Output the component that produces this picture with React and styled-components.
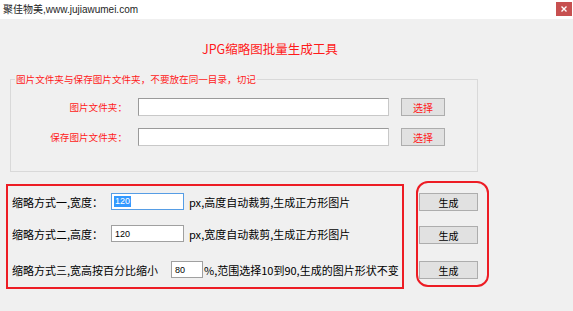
import React from 'react';
import styled, { createGlobalStyle } from 'styled-components';

const Global = createGlobalStyle`
  html, body { margin: 0; padding: 0; }
  body {
    width: 573px; height: 311px; overflow: hidden; background: #f0f0f0;
    font-family: "Noto Sans CJK SC", sans-serif;
  }
  * { box-sizing: border-box; }
`;

const Window = styled.div`
  width: 573px; height: 311px;
  display: flex; flex-direction: column;
  background: #f0f0f0;
`;

const TitleBar = styled.div`
  height: 19px; flex: none;
  background: #fff;
  display: flex; align-items: flex-start; justify-content: space-between;
  padding: 0 1px 0 3px;
`;

const Caption = styled.span`
  font-family: "Liberation Sans", "Noto Sans CJK SC", sans-serif;
  font-size: 10px; color: #1e1e1e; line-height: 19px;
`;

const CloseBtn = styled.div`
  width: 16px; height: 14px; margin-top: 2px;
  background: #c75050;
  display: flex; align-items: center; justify-content: center;
`;

const AppTitle = styled.div`
  margin-top: 20px; padding-left: 202px;
  height: 20px; line-height: 20px;
  font-size: 12.5px; color: #ff1a1a;
`;

const GroupBox = styled.fieldset`
  margin: 14px 0 0 10px; width: 468px;
  padding: 0 0 25px 0;
  border: 1px solid #d9d9d9;
  display: flex; flex-direction: column; gap: 12px;
`;

const Legend = styled.legend`
  margin-left: 4px; padding: 0 1px;
  font-size: 9.6px; line-height: 12px; color: #ff1a1a;
`;

const PathRow = styled.div`
  display: flex; align-items: center; height: 18px;
  &:first-of-type { margin-top: 13px; }
`;

const PathLabel = styled.div`
  width: 116px; line-height: 18px;
  text-align: right; font-size: 9.6px; color: #ff1a1a;
  margin-right: 11px;
`;

const PathInput = styled.div`
  width: 251px; height: 18px;
  background: #fff;
  border: 1px solid #9a9a9a;
  border-bottom-color: #c8c8c8; border-right-color: #c8c8c8;
`;

const Button = styled.div`
  width: ${p => p.$w}px; height: 18px;
  background: #e1e1e1; border: 1px solid #adadad;
  display: flex; align-items: center; justify-content: center;
  font-size: ${p => p.$fs || 10}px; color: ${p => p.$color || '#000'};
`;

const PickButton = styled(Button)`
  margin-left: 12px;
`;

const Bottom = styled.div`
  margin-top: 9px;
  display: flex; align-items: flex-start;
`;

const OptionsBox = styled.div`
  margin: 3px 0 0 6px;
  width: 398px; height: 105px;
  border: 2px solid #ed1c24;
  padding: 7px 0 0 4px;
  display: flex; flex-direction: column;
`;

const OptionRow = styled.div`
  display: flex; align-items: center;
  height: 17px;
  margin-top: ${p => p.$mt || 0}px;
  font-size: 11px; color: #000; white-space: nowrap;
`;

const OptLabel = styled.span`
  width: ${p => p.$w}px; flex: none;
`;

const NumBox = styled.div`
  width: ${p => p.$w}px; height: 17px; flex: none;
  background: #fff;
  border: 1px solid ${p => (p.$focus ? '#569de5' : '#a0a0a0')};
  padding-left: 2px;
  display: flex; align-items: center;
  font-size: 9px; font-family: "Liberation Sans", sans-serif; color: #000;
  margin-right: ${p => p.$gap || 0}px;
`;

const Selected = styled.span`
  background: #3399ff; color: #fff; padding: 0 1px; line-height: 11px;
`;

const Plain = styled.span`
  padding: 0 1px;
`;

const ActionBox = styled.div`
  margin-left: 12px;
  width: 73px; height: 106px;
  border: 2px solid #ed1c24; border-radius: 12px;
  padding: 10px 0 0 1px;
  display: flex; flex-direction: column;
`;

const GenButton = styled(Button)`
  margin-top: ${p => p.$mt || 0}px;
`;

export default function App() {
  return (
    <>
      <Global />
      <Window>
        <TitleBar>
          <Caption>聚佳物美,www.jujiawumei.com</Caption>
          <CloseBtn>
            <svg width="6" height="6" viewBox="0 0 6 6">
              <path d="M0.5 0.5 L5.5 5.5 M5.5 0.5 L0.5 5.5" stroke="#fff" strokeWidth="1.4" />
            </svg>
          </CloseBtn>
        </TitleBar>
        <AppTitle>JPG缩略图批量生成工具</AppTitle>
        <GroupBox>
          <Legend>图片文件夹与保存图片文件夹，不要放在同一目录，切记</Legend>
          <PathRow>
            <PathLabel>图片文件夹：</PathLabel>
            <PathInput />
            <PickButton $w={44} $color="#ff1a1a" $fs={10}>选择</PickButton>
          </PathRow>
          <PathRow>
            <PathLabel>保存图片文件夹：</PathLabel>
            <PathInput />
            <PickButton $w={44} $color="#ff1a1a" $fs={10}>选择</PickButton>
          </PathRow>
        </GroupBox>
        <Bottom>
          <OptionsBox>
            <OptionRow>
              <OptLabel $w={99}>缩略方式一,宽度：</OptLabel>
              <NumBox $w={73} $focus $gap={5}><Selected>120</Selected></NumBox>
              <span>px,高度自动裁剪,生成正方形图片</span>
            </OptionRow>
            <OptionRow $mt={15}>
              <OptLabel $w={99}>缩略方式二,高度：</OptLabel>
              <NumBox $w={73} $gap={5}><Plain>120</Plain></NumBox>
              <span>px,宽度自动裁剪,生成正方形图片</span>
            </OptionRow>
            <OptionRow $mt={19}>
              <OptLabel $w={159}>缩略方式三,宽高按百分比缩小</OptLabel>
              <NumBox $w={32} $gap={1}><Plain>80</Plain></NumBox>
              <span>%,范围选择10到90,生成的图片形状不变</span>
            </OptionRow>
          </OptionsBox>
          <ActionBox>
            <GenButton $w={59}>生成</GenButton>
            <GenButton $w={59} $mt={15}>生成</GenButton>
            <GenButton $w={59} $mt={17}>生成</GenButton>
          </ActionBox>
        </Bottom>
      </Window>
    </>
  );
}
